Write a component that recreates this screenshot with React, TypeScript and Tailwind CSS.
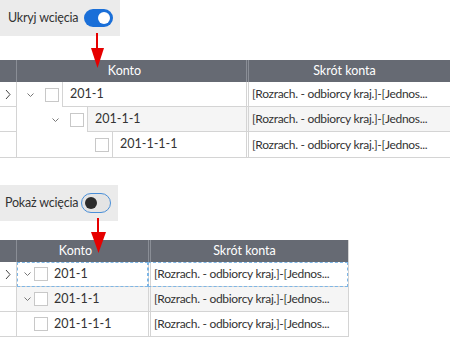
const SHORT = "[Rozrach. - odbiorcy kraj.]-[Jednos...";

const Chevron = ({ dir }: { dir: "down" | "right" }) =>
  dir === "down" ? (
    <svg width="9" height="6" viewBox="0 0 9 6" className="shrink-0">
      <path d="M1.5 1.5l3 3 3-3" fill="none" stroke="#777" strokeWidth="1" />
    </svg>
  ) : (
    <svg width="6" height="11" viewBox="0 0 6 11" className="shrink-0">
      <path d="M1 1l4 4.5L1 10" fill="none" stroke="#444" strokeWidth="1" />
    </svg>
  );

const Box = () => <span className="w-[14px] h-[14px] shrink-0 border border-[#c8c8c8] bg-white" />;

const Arrow = ({ x, top, line, head, w }: { x: number; top: number; line: number; head: number; w: number }) => (
  <div className="absolute flex flex-col items-center pointer-events-none" style={{ left: x - w / 2, top, width: w }}>
    <div className="w-[2px] bg-[#e60000]" style={{ height: line }} />
    <svg width={w} height={head} viewBox={`0 0 ${w} ${head}`}>
      <polygon points={`0,0 ${w},0 ${w / 2},${head}`} fill="#e60000" />
    </svg>
  </div>
);

const Toolbar = ({ label, on, className }: { label: string; on: boolean; className: string }) => (
  <div className={`h-[36px] bg-[#ebebeb] flex items-center text-[#333] whitespace-nowrap ${className}`}>
    <span className="shrink-0 tracking-[-0.2px]">{label}</span>
    {on ? (
      <span className="w-[29px] h-[18px] shrink-0 rounded-full bg-[#1a6fd8] flex items-center justify-end pr-[3px]">
        <span className="w-[12px] h-[12px] rounded-full bg-white" />
      </span>
    ) : (
      <span className="w-[30px] h-[20px] shrink-0 rounded-full bg-[#e4e4e4] border-[1.5px] border-[#4a8fd8] flex items-center pl-[3px]">
        <span className="w-[12px] h-[12px] rounded-full bg-[#2b2b2b]" />
      </span>
    )}
  </div>
);

const Header = ({ cols }: { cols: string }) => (
  <div className={`grid ${cols} h-[22px] bg-[#666a73] text-white`}>
    <div className="border-r border-[#8a8e96]" />
    <div className="flex items-center justify-center pr-[14px]">Konto</div>
    <div className="flex items-center justify-center pr-[10px] border-l-[3px] border-double border-[#8a8e96]">Skrót konta</div>
  </div>
);

const IndentTable = () => {
  const rows = ["201-1", "201-1-1", "201-1-1-1"];
  return (
    <div className="w-[450px] border-b border-[#d4d4d4]">
      <Header cols="grid-cols-[17px_229px_minmax(0,1fr)]" />
      {rows.map((r, i) => {
        const gray = i === 1;
        return (
          <div key={r} className="grid grid-cols-[17px_229px_minmax(0,1fr)] h-[25px]">
            <div className={`border-r border-[#d4d4d4] flex items-center pl-[5px] ${i < 2 ? "border-b" : ""}`}>
              {i === 0 && <Chevron dir="right" />}
            </div>
            <div className="flex">
              <div className="flex items-center shrink-0" style={{ paddingLeft: 9 + i * 25 }}>
                {i < 2 ? <Chevron dir="down" /> : <span className="w-[9px]" />}
                <span className="w-[10px]" />
                <Box />
                <span className="w-[3px]" />
              </div>
              <div className={`flex-1 flex items-center pl-[7px] border-l border-[#d4d4d4] ${i < 2 ? "border-b" : ""} ${gray ? "bg-[#f5f5f5]" : "bg-white"}`}>
                {r}
              </div>
            </div>
            <div className={`min-w-0 overflow-hidden flex items-center pl-[3px] pr-[2px] border-l-[3px] border-double border-[#d4d4d4] ${i < 2 ? "border-b" : ""} ${gray ? "bg-[#f5f5f5]" : "bg-white"}`}>
              <span className="whitespace-nowrap text-[12px] tracking-[-0.3px]">{SHORT}</span>
            </div>
          </div>
        );
      })}
    </div>
  );
};

const FlatTable = () => {
  const rows = ["201-1", "201-1-1", "201-1-1-1"];
  return (
    <div className="w-[349px] border-r border-[#d4d4d4]">
      <Header cols="grid-cols-[17px_131px_minmax(0,1fr)]" />
      {rows.map((r, i) => {
        const gray = i === 1;
        const focus = i === 0 ? "outline outline-1 outline-dashed outline-[#7db6e6] -outline-offset-1" : "";
        return (
          <div key={r} className="grid grid-cols-[17px_131px_minmax(0,1fr)] h-[25px]">
            <div className="border-r border-b border-[#d4d4d4] flex items-center pl-[5px]">
              {i === 0 && <Chevron dir="right" />}
            </div>
            <div className={`flex items-center border-b border-[#d4d4d4] pl-[6px] ${gray ? "bg-[#f5f5f5]" : "bg-white"} ${focus}`}>
              {i < 2 ? <Chevron dir="down" /> : <span className="w-[9px]" />}
              <span className="w-[2px]" />
              <Box />
              <span className="w-[6px]" />
              {r}
            </div>
            <div className={`min-w-0 overflow-hidden flex items-center pl-[3px] pr-[2px] border-l-[3px] border-double border-b border-[#d4d4d4] ${gray ? "bg-[#f5f5f5]" : "bg-white"} ${focus}`}>
              <span className="whitespace-nowrap text-[12px] tracking-[-0.3px]">{SHORT}</span>
            </div>
          </div>
        );
      })}
    </div>
  );
};

export default function App() {
  return (
    <div
      className="relative w-[450px] h-[338px] bg-white overflow-hidden text-[12.5px] text-[#333]"
      style={{ fontFamily: 'Lato, "Open Sans", sans-serif' }}
    >
      <Toolbar label="Ukryj wcięcia" on className="w-[120px] pl-[8px] gap-[6px]" />
      <div className="h-[24px]" />
      <IndentTable />
      <div className="h-[27px]" />
      <Toolbar label="Pokaż wcięcia" on={false} className="w-[118px] pl-[5px] gap-[3px]" />
      <div className="h-[19px]" />
      <FlatTable />
      <Arrow x={97} top={33} line={15} head={20} w={13} />
      <Arrow x={98} top={218} line={14} head={21} w={15} />
    </div>
  );
}
